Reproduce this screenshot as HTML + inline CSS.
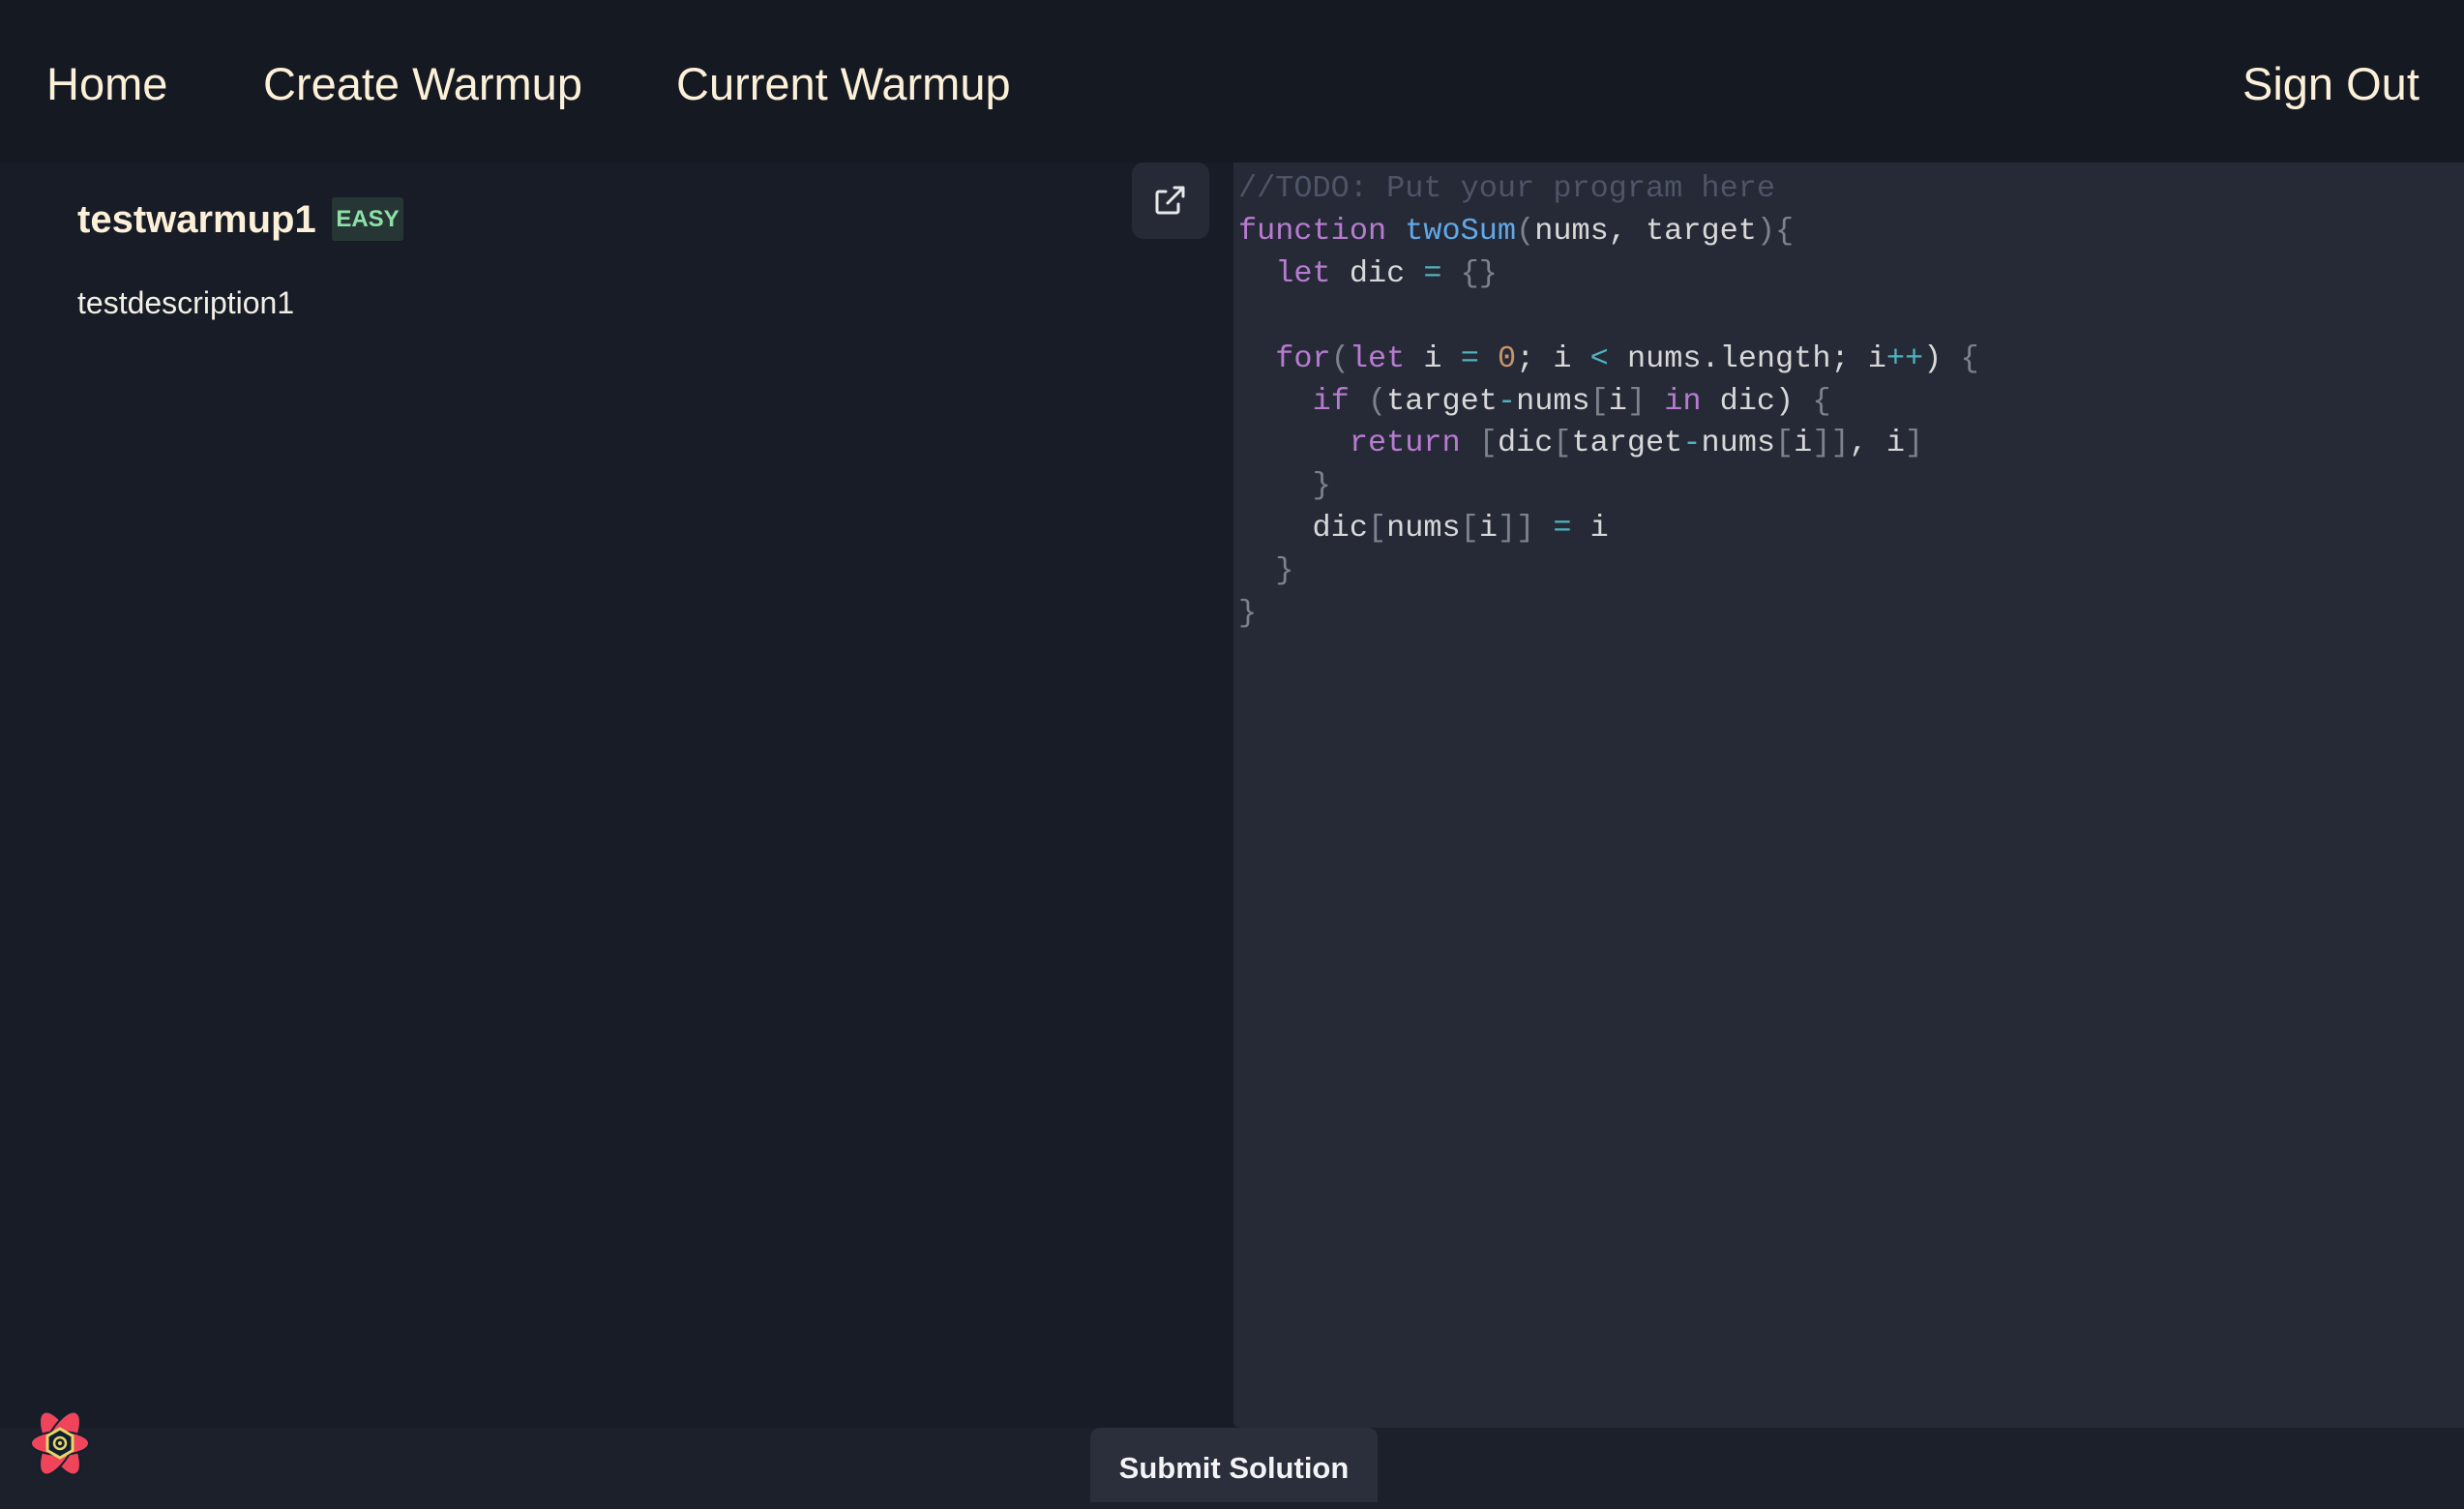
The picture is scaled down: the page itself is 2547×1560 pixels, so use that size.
<!DOCTYPE html>
<html><head><meta charset="utf-8"><style>
*{margin:0;padding:0;box-sizing:border-box}
body{width:2547px;height:1553px;background:#1c202b;font-family:"Liberation Sans",sans-serif;position:relative;overflow:hidden}
.nav{position:absolute;left:0;top:0;width:2547px;height:168px;background:#151922}
.nav span{position:absolute;top:63px;font-size:47px;color:#fdf0d8;line-height:1;white-space:nowrap}
.left{position:absolute;left:0;top:168px;width:1275px;height:1308px;background:#181c26}
.ed{position:absolute;left:1275px;top:168px;width:1272px;height:1308px;background:#262a37;border-bottom-left-radius:8px}
.btn{position:absolute;left:1170px;top:168px;width:80px;height:79px;background:#262a36;border-radius:12px}
.title{position:absolute;left:80px;top:207px;font-size:40px;font-weight:bold;color:#fdf0d8;line-height:1}
.badge{position:absolute;left:343px;top:204px;width:74px;height:45px;background:#263634;border-radius:3px;color:#8ee0a8;font-weight:bold;font-size:24px;text-align:center;line-height:45px}
.desc{position:absolute;left:80px;top:297px;font-size:32px;color:#f2efe6;line-height:1}
pre{position:absolute;left:1280px;top:173px;font-family:"Liberation Mono",monospace;font-size:31.9px;line-height:43.9px;color:#d8d8d8}
.c{color:#4f5466}.k{color:#b77bd0}.f{color:#61a8e6}.o{color:#4fb3be}.n{color:#c9946a}.b{color:#7d828d}
.sub{position:absolute;left:1127px;top:1476px;width:297px;height:77px;background:#2b2e3b;border-radius:10px 10px 0 0;color:#f4f4f6;font-weight:bold;font-size:31px;text-align:center;line-height:84px}
</style></head><body>
<div class="nav">
<span style="left:48px">Home</span>
<span style="left:272px">Create Warmup</span>
<span style="left:699px">Current Warmup</span>
<span style="left:2318px">Sign Out</span>
</div>
<div class="left"></div>
<div class="title">testwarmup1</div>
<div class="badge">EASY</div>
<div class="desc">testdescription1</div>
<div class="btn"><svg width="80" height="79" viewBox="0 0 80 79"><g fill="none" stroke="#e8e8ea" stroke-width="3" stroke-linecap="round" stroke-linejoin="round"><path d="M35 30h-7a2 2 0 0 0-2 2v18a2 2 0 0 0 2 2h18a2 2 0 0 0 2-2v-7"/><path d="M37 42L53 26M44 26h9v9"/></g></svg></div>
<div class="ed"></div>
<pre><span class="c">//TODO: Put your program here</span>
<span class="k">function</span> <span class="f">twoSum</span><span class="b">(</span>nums, target<span class="b">){</span>
  <span class="k">let</span> dic <span class="o">=</span> <span class="b">{}</span>

  <span class="k">for</span><span class="b">(</span><span class="k">let</span> i <span class="o">=</span> <span class="n">0</span>; i <span class="o">&lt;</span> nums.length; i<span class="o">++</span>) <span class="b">{</span>
    <span class="k">if</span> <span class="b">(</span>target<span class="o">-</span>nums<span class="b">[</span>i<span class="b">]</span> <span class="k">in</span> dic) <span class="b">{</span>
      <span class="k">return</span> <span class="b">[</span>dic<span class="b">[</span>target<span class="o">-</span>nums<span class="b">[</span>i<span class="b">]]</span>, i<span class="b">]</span>
    <span class="b">}</span>
    dic<span class="b">[</span>nums<span class="b">[</span>i<span class="b">]]</span> <span class="o">=</span> i
  <span class="b">}</span>
<span class="b">}</span></pre>
<div class="sub">Submit Solution</div>
<svg style="position:absolute;left:22px;top:1452px" width="80" height="80" viewBox="-40 -40 80 80">
<g fill="#f0445a" stroke="#10202e" stroke-width="2">
<ellipse rx="14" ry="36" transform="rotate(-28)"/>
<ellipse rx="14" ry="36" transform="rotate(28)"/>
<ellipse rx="12" ry="30" transform="rotate(90)"/>
</g>
<polygon points="0,-15 13,-7.5 13,7.5 0,15 -13,7.5 -13,-7.5" fill="#10202e" stroke="#e8d46a" stroke-width="3"/>
<circle r="6" fill="none" stroke="#e8d46a" stroke-width="2.5"/>
<circle r="2" fill="#e8d46a"/>
</svg>
</body></html>
